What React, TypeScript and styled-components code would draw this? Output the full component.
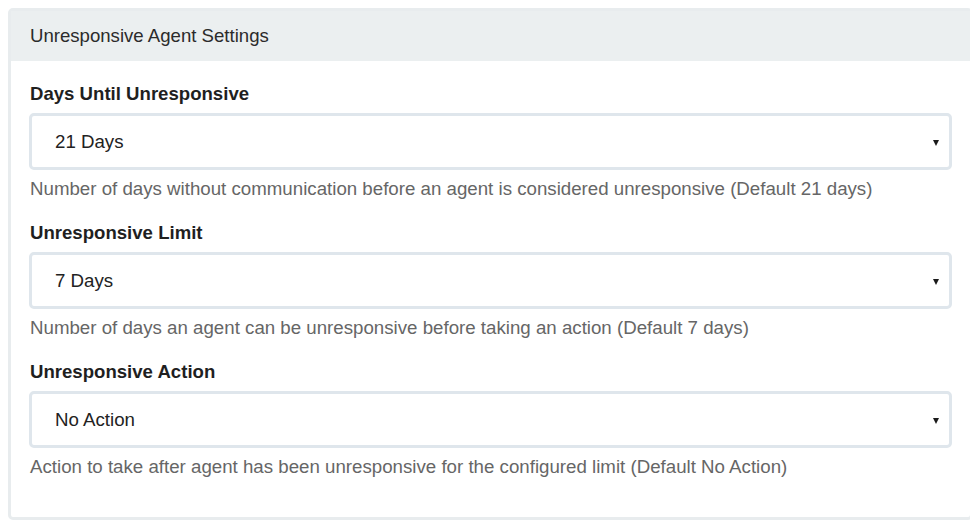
import React, { useState } from 'react'
import styled, { createGlobalStyle } from 'styled-components'

const GlobalStyle = createGlobalStyle`
    body {
        margin: 8px;
        background: #fff;
        font-family: "Liberation Sans", Arial, sans-serif;
        color: #222;
    }
`
const Panel = styled.div`
    width: 965px;
    border: 3px solid #e8ecee;
    border-radius: 5px;
    background: #fff;
    box-sizing: border-box;
`
const Header = styled.div`
    background: #ebeff0;
    height: 50px;
    display: flex;
    align-items: center;
    padding: 0 19px;
    font-size: 18.6px;
    color: #2b2b2b;
`
const Body = styled.div`
    padding: 22px 18px 39px 18px;
    display: flex;
    flex-direction: column;
`
const Field = styled.div`
    display: flex;
    flex-direction: column;
    & + & {
        margin-top: 22px;
    }
`
const Label = styled.label`
    font-size: 18.6px;
    font-weight: bold;
    color: #1f1f1f;
    line-height: 22px;
    margin-bottom: 8px;
    padding-left: 1px;
`
const SelectBox = styled.div`
    position: relative;
    height: 57px;
    box-sizing: border-box;
    border: 3px solid #dfe6ec;
    border-radius: 5px;
    display: flex;
    align-items: center;
`
const Select = styled.select`
    appearance: none;
    -webkit-appearance: none;
    border: none;
    outline: none;
    background: transparent;
    width: 100%;
    height: 100%;
    padding: 0 40px 0 23px;
    font-family: "Liberation Sans", Arial, sans-serif;
    font-size: 18.7px;
    color: #222;
`
const Arrow = styled.span`
    position: absolute;
    right: 10px;
    top: 50%;
    margin-top: -2px;
    width: 0;
    height: 0;
    border-left: 3.5px solid transparent;
    border-right: 3.5px solid transparent;
    border-top: 6px solid #1a1a1a;
    pointer-events: none;
`
const Help = styled.div`
    margin-top: 8px;
    font-size: 18.7px;
    line-height: 22px;
    color: #666;
    padding-left: 1px;
`

type FieldDef = {
    label: string
    options: string[]
    value: string
    help: string
}

const fields: FieldDef[] = [
    {
        label: 'Days Until Unresponsive',
        options: ['7 Days', '14 Days', '21 Days', '30 Days', '60 Days'],
        value: '21 Days',
        help: 'Number of days without communication before an agent is considered unresponsive (Default 21 days)',
    },
    {
        label: 'Unresponsive Limit',
        options: ['1 Day', '3 Days', '7 Days', '14 Days', '30 Days'],
        value: '7 Days',
        help: 'Number of days an agent can be unresponsive before taking an action (Default 7 days)',
    },
    {
        label: 'Unresponsive Action',
        options: ['No Action', 'Disable Agent', 'Delete Agent'],
        value: 'No Action',
        help: 'Action to take after agent has been unresponsive for the configured limit (Default No Action)',
    },
]

const App = () => {
    const [values, setValues] = useState<string[]>(fields.map((f) => f.value))

    const onChange = (index: number, value: string) => {
        setValues((prev) => prev.map((v, i) => (i === index ? value : v)))
    }

    return (
        <>
            <GlobalStyle />
            <Panel>
                <Header>Unresponsive Agent Settings</Header>
                <Body>
                    {fields.map((field, index) => (
                        <Field key={field.label}>
                            <Label>{field.label}</Label>
                            <SelectBox>
                                <Select value={values[index]} onChange={(e) => onChange(index, e.target.value)}>
                                    {field.options.map((opt) => (
                                        <option key={opt} value={opt}>{opt}</option>
                                    ))}
                                </Select>
                                <Arrow />
                            </SelectBox>
                            <Help>{field.help}</Help>
                        </Field>
                    ))}
                </Body>
            </Panel>
        </>
    )
}

export default App
